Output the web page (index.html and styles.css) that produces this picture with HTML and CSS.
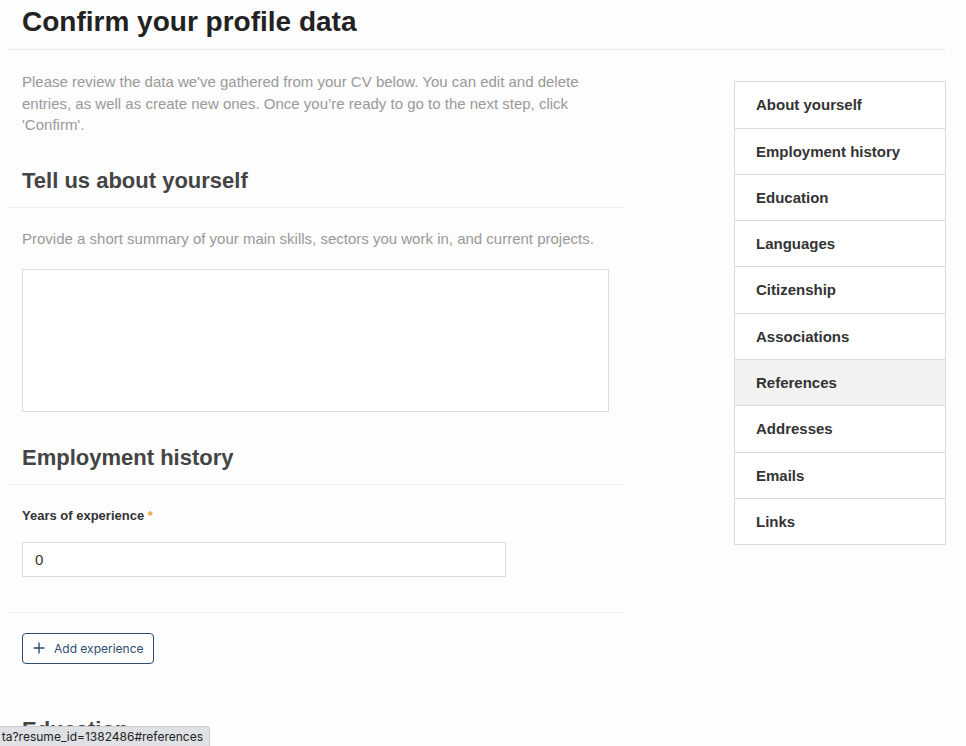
FILE: index.html
```html
<!DOCTYPE html>
<html lang="en">
<head>
<meta charset="utf-8">
<title>Confirm your profile data</title>
<link rel="stylesheet" href="styles.css">
</head>
<body>
<div class="page">
  <header class="page-header">
    <h1 class="title">Confirm your profile data</h1>
  </header>
  <div class="layout">
    <main class="main">
      <p class="intro">Please review the data we've gathered from your CV below. You can edit and delete entries, as well as create new ones. Once you’re ready to go to the next step, click 'Confirm'.</p>

      <section class="section">
        <h2 class="section-title">Tell us about yourself</h2>
        <div class="section-body">
          <p class="desc">Provide a short summary of your main skills, sectors you work in, and current projects.</p>
          <textarea class="summary"></textarea>
        </div>
      </section>

      <section class="section">
        <h2 class="section-title">Employment history</h2>
        <div class="section-body">
          <label class="label">Years of experience <span class="req">*</span></label>
          <input class="field" type="text" value="0">
        </div>
        <div class="divider"></div>
        <div class="section-body">
          <button class="btn-add" type="button">
            <svg class="plus" width="12" height="12" viewBox="0 0 12 12"><path d="M6 0.5v11M0.5 6h11" stroke="#2c4c6e" stroke-width="1.4" fill="none"/></svg>
            <span>Add experience</span>
          </button>
        </div>
      </section>

      <section class="section edu">
        <h2 class="section-title">Education</h2>
      </section>
    </main>

    <nav class="sidebar">
      <a class="nav-item">About yourself</a>
      <a class="nav-item">Employment history</a>
      <a class="nav-item">Education</a>
      <a class="nav-item">Languages</a>
      <a class="nav-item">Citizenship</a>
      <a class="nav-item">Associations</a>
      <a class="nav-item active">References</a>
      <a class="nav-item">Addresses</a>
      <a class="nav-item">Emails</a>
      <a class="nav-item">Links</a>
    </nav>
  </div>
</div>
<div class="statusbar"><span>ta?resume_id=1382486#references</span></div>
</body>
</html>
```

FILE: styles.css
```css
* { box-sizing: border-box; }
html, body { margin: 0; padding: 0; }
body {
  background: #fdfdfd;
  font-family: "Liberation Sans", Arial, sans-serif;
  color: #333;
  overflow: hidden;
  height: 746px;
}
.page { padding: 0 20px 0 8px; }
.page-header { border-bottom: 1px solid #ececec; }
.title {
  margin: 0;
  padding: 8px 14px 13px;
  font-size: 28px;
  line-height: 28px;
  font-weight: bold;
  color: #222;
}
.layout { display: flex; align-items: flex-start; }
.main { width: 616px; flex: none; }
.intro {
  margin: 21px 15px 0 14px;
  font-size: 15px;
  line-height: 21.5px;
  color: #999;
}
.section-title {
  margin: 33px 0 0;
  padding: 0 14px 14px;
  font-size: 22px;
  line-height: 24px;
  font-weight: bold;
  color: #444;
  border-bottom: 1px solid #ececec;
}
.section-body { padding: 0 15px 0 14px; }
.desc {
  margin: 21px 0 0;
  font-size: 15px;
  line-height: 20px;
  color: #999;
}
.summary {
  display: block;
  margin: 20px 0 0;
  width: 587px;
  height: 143px;
  border: 1px solid #dcdcdc;
  background: #fff;
  resize: none;
}
.section + .section .section-title { margin-top: 34px; }
.label {
  display: block;
  margin-top: 22px;
  font-size: 13px;
  line-height: 18px;
  font-weight: bold;
  color: #333;
}
.req { color: #e9a33c; }
.field {
  display: block;
  margin-top: 17px;
  width: 484px;
  height: 35px;
  border: 1px solid #dcdcdc;
  background: #fff;
  padding: 0 12px;
  font-family: "Liberation Sans", Arial, sans-serif;
  font-size: 15px;
  color: #333;
}
.divider { margin-top: 35px; border-bottom: 1px solid #ececec; }
.btn-add {
  display: flex;
  align-items: center;
  gap: 9px;
  margin-top: 20px;
  width: 132px;
  height: 31px;
  padding: 0 0 0 10px;
  border: 1px solid #2c4c6e;
  border-radius: 4px;
  background: #fff;
  color: #2c4c6e;
  font-family: Inter, "Noto Sans", sans-serif;
  font-size: 12px;
}
.plus { flex: none; }
.section.edu .section-title { margin-top: 54px; border-bottom: none; }
.sidebar {
  margin-left: auto;
  margin-top: 31px;
  width: 212px;
  flex: none;
  border: 1px solid #d9d9d9;
  background: #fff;
  display: flex;
  flex-direction: column;
}
.nav-item {
  display: block;
  padding: 0 21px;
  height: 46.3px;
  line-height: 46px;
  font-size: 15px;
  font-weight: bold;
  color: #333;
  border-top: 1px solid #d9d9d9;
}
.nav-item:first-child { border-top: none; height: 45.6px; line-height: 45px; }
.nav-item.active { background: #f2f2f2; }
.statusbar {
  position: fixed;
  left: 0;
  bottom: 0;
  width: 210px;
  height: 20px;
  background: #dfe1e5;
  border-top: 1px solid #c8cacf;
  border-right: 1px solid #c8cacf;
  border-top-right-radius: 4px;
  display: flex;
  justify-content: flex-end;
  align-items: center;
  overflow: hidden;
  padding-right: 6px;
  white-space: nowrap;
  font-family: Inter, "Noto Sans", sans-serif;
  font-size: 12px;
  color: #222;
}
.statusbar span { flex: none; }
```
